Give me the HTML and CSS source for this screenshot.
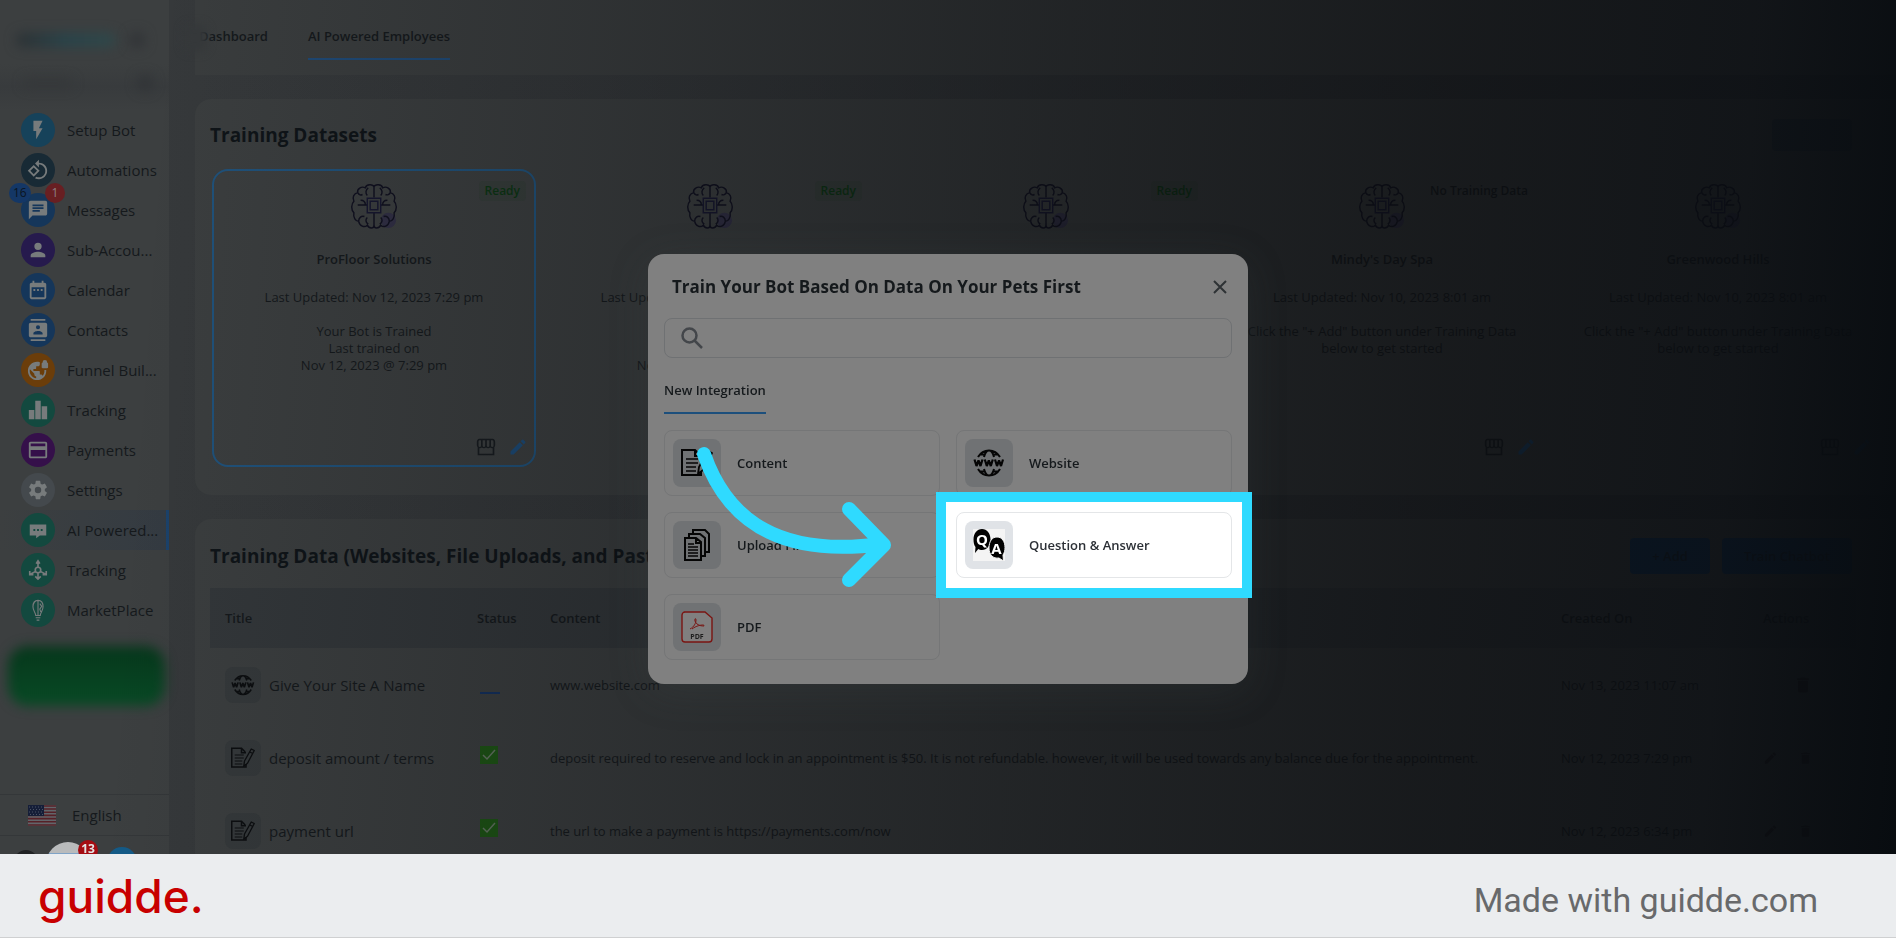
FILE: index.html
```html
<!DOCTYPE html>
<html lang="en">
<head>
<meta charset="utf-8">
<title>AI Powered Employees</title>
<link rel="stylesheet" href="styles.css">
</head>
<body>
<svg class="defs" aria-hidden="true">
  <symbol id="brain" viewBox="0 0 48 48">
    <circle class="brain-tint" cx="39" cy="39" r="8"/>
    <path d="M24 2v13M24 31v15M24 4c-1-3-8-3-9 1-4-2-9 1-8 5-4 1-6 5-4 9-3 3-3 9 0 12-1 5 2 9 5 9 1 5 6 7 9 4 2 4 7 4 7 0M24 4c1-3 8-3 9 1 4-2 9 1 8 5 4 1 6 5 4 9 3 3 3 9 0 12 1 5-2 9-5 9-1 5-6 7-9 4-2 4-7 4-7 0M18 5c-3 2-3 6-1 8M7 10c1 2 3 3 5 2M7 23h10M10 18c3 0 5 2 5 5M8 40c0-4 3-6 6-5M18 43c-3-2-3-5-1-7M30 5c3 2 3 6 1 8M41 10c-1 2-3 3-5 2M41 23H31M38 18c-3 0-5 2-5 5M40 40c0-4-3-6-6-5M30 43c3-2 3-5 1-7"/>
    <path class="chip" d="M17 16h14v15H17zM20 19h8v9h-8z"/>
  </symbol>
  <symbol id="store" viewBox="0 0 24 24"><path fill="currentColor" d="M20 2H4C2.300 2 1 3.800 1 6v4c0 1 .4 1.800 1 2.400V22h20v-9.600c.6-.6 1-1.400 1-2.400V6c0-2.200-1.300-4-3-4zM4 4h2v6.500a1.500 1.500 0 0 1-3 0V6c0-1 .4-2 1-2zm4 0h3v6.500a1.500 1.500 0 0 1-3 0zm5 0h3v6.500a1.500 1.500 0 0 1-3 0zm5 0h2c.6 0 1 1 1 2v4.500a1.500 1.500 0 0 1-3 0zM4 20v-6.600c1 .2 2.200-.1 3-.9 1.400 1.300 3.600 1.300 5 0 1.400 1.300 3.600 1.300 5 0 .8.8 2 1.100 3 .9V20z"/></symbol>
  <symbol id="pencil" viewBox="0 0 24 24"><path fill="currentColor" d="M3 17.250V21h3.750L17.810 9.940l-3.750-3.750L3 17.250zM20.710 7.040a1 1 0 0 0 0-1.410l-2.340-2.340a1 1 0 0 0-1.410 0l-1.830 1.830 3.750 3.750 1.830-1.830z"/></symbol>
  <symbol id="trash" viewBox="0 0 24 24"><path fill="currentColor" d="M6 19c0 1.100.9 2 2 2h8c1.100 0 2-.9 2-2V7H6v12zM19 4h-3.500l-1-1h-5l-1 1H5v2h14V4z"/></symbol>
  <symbol id="www" viewBox="0 0 32 32">
    <g fill="none" stroke="currentColor" stroke-width="2"><path d="M5 10C8 5 12 3.500 16 3.500S24 5 27 10M5 22c3 5 7 6.500 11 6.500S24 27 27 22M11 10c1-4 3-6.500 5-6.500s4 2.500 5 6.500M11 22c1 4 3 6.500 5 6.500s4-2.500 5-6.500M7 7.500h4M21 7.500h4M7 24.500h4M21 24.500h4"/><path stroke-width="2.200" stroke-linejoin="bevel" d="M1.500 12.500l2 6.500 2-5.500 2 5.500 2-6.500M11.800 12.500l2 6.500 2-5.500 2 5.500 2-6.500M22 12.500l2 6.500 2-5.500 2 5.500 2-6.500"/></g>
  </symbol>
  <symbol id="note" viewBox="0 0 32 32">
    <g fill="none" stroke="currentColor" stroke-width="2"><path d="M20 24v4H1V3h13l5 5M14 3v6h6"/><path stroke-width="1.500" d="M5 12h12M5 16h12M5 20h10M5 24h10"/></g>
    <path fill="none" stroke="currentColor" stroke-width="1.800" stroke-linejoin="round" d="M27 4l4 2-9 17-5 4 1-7zM25 8l4 2"/>
  </symbol>
  <symbol id="files" viewBox="0 0 32 32"><g fill="none" stroke="currentColor" stroke-width="2"><path d="M4 9h11l5 4v18H4zM8 8V5h11l5 4v18h-3M12 4V1h12l4 4v18h-3M15 9v5h5"/><path stroke-width="1.500" d="M7 15h6M7 18h10M7 21h10M7 24h10M7 27h10"/></g></symbol>
</svg>

<div class="app">
  <aside class="sidebar">
    <div class="brand"><span class="smudge smudge-logo"></span><span class="smudge smudge-dot"></span></div>
    <div class="account"><span class="smudge smudge-line"></span><span class="smudge smudge-dot"></span></div>
    <nav class="menu" aria-label="Main">
      <a href="#"><span class="ic sky"><svg viewBox="0 0 24 24"><path d="M7 2v11h3v9l7-12h-4l4-8z"/></svg></span><span class="label">Setup Bot</span></a>
      <a href="#"><span class="ic slate"><svg viewBox="0 0 24 24"><path d="M7.340 6.410L.86 12.900l6.490 6.480 6.490-6.480-6.500-6.490zM3.690 12.900l3.660-3.660L11 12.900l-3.660 3.660-3.650-3.660zm15.670-6.260C17.610 4.880 15.300 4 13 4V.76L8.760 5 13 9.240V6c1.790 0 3.580.68 4.950 2.050 2.730 2.730 2.730 7.170 0 9.900C16.580 19.320 14.790 20 13 20c-.97 0-1.940-.21-2.840-.61l-1.490 1.490C10.020 21.620 11.510 22 13 22c2.300 0 4.610-.88 6.360-2.640 3.520-3.510 3.520-9.210 0-12.720z"/></svg></span><span class="label">Automations</span></a>
      <a href="#"><span class="ic blue"><svg viewBox="0 0 24 24"><path d="M20 2H4c-1.100 0-2 .9-2 2v18l4-4h14c1.100 0 2-.9 2-2V4c0-1.100-.9-2-2-2zM6 9h12v2H6V9zm8 5H6v-2h8v2zm4-6H6V6h12v2z"/></svg><b class="count count-left">16</b><b class="count count-right">1</b></span><span class="label">Messages</span></a>
      <a href="#"><span class="ic violet"><svg viewBox="0 0 24 24"><path d="M12 12a4 4 0 1 0 0-8 4 4 0 0 0 0 8zm0 2c-2.670 0-8 1.340-8 4v2h16v-2c0-2.660-5.330-4-8-4z"/></svg></span><span class="label">Sub-Accou...</span></a>
      <a href="#"><span class="ic blue"><svg viewBox="0 0 24 24"><path d="M9 11H7v2h2v-2zm4 0h-2v2h2v-2zm4 0h-2v2h2v-2zm2-7h-1V2h-2v2H8V2H6v2H5c-1.110 0-2 .9-2 2v14c0 1.100.89 2 2 2h14c1.100 0 2-.9 2-2V6c0-1.100-.9-2-2-2zm0 16H5V9h14v11z"/></svg></span><span class="label">Calendar</span></a>
      <a href="#"><span class="ic blue"><svg viewBox="0 0 24 24"><path d="M20 0H4v2h16V0zM4 24h16v-2H4v2zM20 4H4c-1.100 0-2 .9-2 2v12c0 1.100.9 2 2 2h16c1.100 0 2-.9 2-2V6c0-1.100-.9-2-2-2zm-8 2.750a2.250 2.250 0 1 1 0 4.500 2.250 2.250 0 0 1 0-4.500zM17 17H7v-1.500c0-1.670 3.330-2.500 5-2.500s5 .83 5 2.500V17z"/></svg></span><span class="label">Contacts</span></a>
      <a href="#"><span class="ic orange"><svg viewBox="0 0 24 24"><path d="M22 4v-.5a2.500 2.500 0 0 0-5 0V4c-.55 0-1 .45-1 1v4c0 .55.45 1 1 1h5c.55 0 1-.45 1-1V5c0-.55-.45-1-1-1zm-3.080 8c.04.33.08.66.08 1 0 2.080-.8 3.970-2.100 5.390-.26-.81-1-1.390-1.900-1.390h-1v-3c0-.55-.45-1-1-1H7v-2h2c.55 0 1-.45 1-1V8h2c1.100 0 2-.9 2-2V3.460C13.050 3.160 12.050 3 11 3 5.480 3 1 7.480 1 13s4.480 10 10 10 10-4.480 10-10c0-.34-.02-.67-.05-1h-2.030zM10 20.930c-3.950-.49-7-3.850-7-7.930 0-.62.08-1.210.21-1.790L8 16v1c0 1.100.9 2 2 2v1.930z"/></svg></span><span class="label">Funnel Buil...</span></a>
      <a href="#"><span class="ic green"><svg viewBox="0 0 24 24"><path d="M2 12h6v10H2zM9 2h6v20H9zM16 8h6v14h-6z"/></svg></span><span class="label">Tracking</span></a>
      <a href="#"><span class="ic purple"><svg viewBox="0 0 24 24"><path d="M20 3H4C2.890 3 2 3.890 2 5v14c0 1.110.89 2 2 2h16c1.110 0 2-.89 2-2V5c0-1.110-.89-2-2-2zm0 16H4v-7h16v7zm0-11H4V5h16v3z"/></svg></span><span class="label">Payments</span></a>
      <a href="#"><span class="ic grey"><svg viewBox="0 0 24 24"><path d="M19.430 12.980c.04-.32.07-.64.07-.98s-.03-.66-.07-.98l2.110-1.650c.19-.15.24-.42.12-.64l-2-3.460c-.12-.22-.39-.3-.61-.22l-2.490 1c-.52-.4-1.080-.73-1.690-.98l-.38-2.650A.49.49 0 0 0 14 2h-4c-.25 0-.46.18-.49.42l-.38 2.650c-.61.25-1.170.59-1.690.98l-2.490-1c-.23-.09-.49 0-.61.22l-2 3.460c-.13.22-.07.49.12.64l2.110 1.650c-.04.32-.07.65-.07.98s.03.66.07.98l-2.110 1.650c-.19.15-.24.42-.12.64l2 3.460c.12.22.39.3.61.22l2.490-1c.52.4 1.080.73 1.690.98l.38 2.650c.03.24.24.42.49.42h4c.25 0 .46-.18.49-.42l.38-2.650c.61-.25 1.170-.59 1.690-.98l2.490 1c.23.09.49 0 .61-.22l2-3.460c.12-.22.07-.49-.12-.64l-2.110-1.650zM12 15.500a3.500 3.500 0 1 1 0-7 3.500 3.500 0 0 1 0 7z"/></svg></span><span class="label">Settings</span></a>
      <a href="#" class="active"><span class="ic green"><svg viewBox="0 0 24 24"><path d="M3 6h18v12h-7l-4 3v-3H3zM7 11v2h2v-2zm4 0v2h2v-2zm4 0v2h2v-2z" fill-rule="evenodd"/></svg></span><span class="label">AI Powered...</span></a>
      <a href="#"><span class="ic green"><svg viewBox="0 0 24 24"><g fill="none" stroke="#777b7c" stroke-width="1.800"><circle cx="12" cy="12" r="3"/><path d="M12 9V3M12 15v7M9.500 13.500L3 17M14.500 13.500L21 17M10 5l2-3 2 3M3 13v4h4M21 13v4h-4M9 19l3 3 3-3"/></g></svg></span><span class="label">Tracking</span></a>
      <a href="#"><span class="ic green"><svg viewBox="0 0 24 24"><g fill="none" stroke="#777b7c" stroke-width="1.200"><path d="M9.500 18c0-3-3-5-3-9.500C6.500 4 9 1.500 12 1.500s5.500 2.500 5.500 7c0 4.500-3 6.500-3 9.500zM9.500 20.500h5M10.500 23h3M12 2v16M14 5l2 3-2 3 1 3"/></g></svg></span><span class="label">MarketPlace</span></a>
    </nav>
    <div class="promo"></div>
    <div class="language"><svg class="flag" viewBox="0 0 28 21"><path fill="#62656b" d="M0 0h28v21H0z"/><path stroke="#562027" stroke-width="1.600" d="M0 1h28M0 4h28M0 7.200h28M0 10.400h28M0 13.600h28M0 16.800h28M0 20h28"/><path fill="#151e38" d="M0 0h16v11H0z"/><path stroke="#4a5265" stroke-dasharray="1 2" d="M1 2h14M2 4.500h14M1 7h14M2 9.500h14"/></svg><span>English</span></div>
    <div class="people"><span class="av av-dark"></span><span class="av av-white"><b>13</b></span><span class="av av-blue"></span></div>
  </aside>

  <main class="main">
    <nav class="tabs" aria-label="Sections"><a href="#">Dashboard</a><a href="#" class="current">AI Powered Employees</a></nav>

    <section class="panel datasets">
      <div class="panel-head"><h2>Training Datasets</h2><button class="ghost" type="button" aria-label="Add dataset"></button></div>
      <div class="cards">
        <article class="card selected"><span class="tag">Ready</span><svg class="brain"><use href="#brain"/></svg><h3>ProFloor Solutions</h3><p>Last Updated: Nov 12, 2023 7:29 pm</p><p class="state">Your Bot is Trained<br>Last trained on<br>Nov 12, 2023 @ 7:29 pm</p><div class="tools"><svg><use href="#store"/></svg><svg class="edit"><use href="#pencil"/></svg></div></article>
        <article class="card"><span class="tag">Ready</span><svg class="brain"><use href="#brain"/></svg><h3></h3><p>Last Updated: Nov 12, 2023 7:29 pm</p><p class="state"><br><br>Nov 12, 2023 @ 7:29 pm</p></article>
        <article class="card"><span class="tag">Ready</span><svg class="brain"><use href="#brain"/></svg></article>
        <article class="card"><span class="tag none">No Training Data</span><svg class="brain"><use href="#brain"/></svg><h3>Mindy's Day Spa</h3><p>Last Updated: Nov 10, 2023 8:01 am</p><p class="state">Click the "+ Add" button under Training Data below to get started</p><div class="tools"><svg><use href="#store"/></svg><svg class="edit"><use href="#pencil"/></svg></div></article>
        <article class="card"><svg class="brain"><use href="#brain"/></svg><h3>Greenwood Hills</h3><p>Last Updated: Nov 10, 2023 8:01 am</p><p class="state">Click the "+ Add" button under Training Data below to get started</p><div class="tools"><svg><use href="#store"/></svg><svg class="edit"><use href="#pencil"/></svg></div></article>
      </div>
    </section>

    <section class="panel data">
      <div class="panel-head"><h2>Training Data (Websites, File Uploads, and Pasted Content)</h2><div class="actions"><button type="button">+ Add</button><button type="button">Train Chatbot</button></div></div>
      <table>
        <thead><tr><th class="c-title">Title</th><th class="c-status">Status</th><th>Content</th><th class="c-date">Created On</th><th class="c-act">Actions</th></tr></thead>
        <tbody>
          <tr><td><div class="name"><span class="thumb"><svg><use href="#www"/></svg></span>Give Your Site A Name</div></td><td><span class="dash"></span></td><td>www.website.com</td><td>Nov 13, 2023 11:07 am</td><td><div class="row-tools"><svg><use href="#trash"/></svg></div></td></tr>
          <tr><td><div class="name"><span class="thumb"><svg><use href="#note"/></svg></span>deposit amount / terms</div></td><td><svg class="check" viewBox="0 0 18 18"><path d="M3 9l4 4 8-9"/></svg></td><td>deposit required to reserve and lock in an appointment is $50. It is not refundable. however, it will be used towards any balance due for the appointment.</td><td>Nov 12, 2023 7:29 pm</td><td><div class="row-tools"><svg><use href="#pencil"/></svg><svg><use href="#trash"/></svg></div></td></tr>
          <tr><td><div class="name"><span class="thumb"><svg><use href="#note"/></svg></span>payment url</div></td><td><svg class="check" viewBox="0 0 18 18"><path d="M3 9l4 4 8-9"/></svg></td><td>the url to make a payment is https://payments.com/now</td><td>Nov 12, 2023 6:34 pm</td><td><div class="row-tools"><svg><use href="#pencil"/></svg><svg><use href="#trash"/></svg></div></td></tr>
        </tbody>
      </table>
    </section>
  </main>
  <div class="shade"></div>
</div>

<footer class="footer"><span class="logo">guidde.</span><a href="#">Made with guidde.com</a></footer>

<div class="overlay">
  <div class="modal" role="dialog" aria-labelledby="modal-title">
    <header><h1 id="modal-title">Train Your Bot Based On Data On Your Pets First</h1><button class="close" type="button" aria-label="Close"><svg viewBox="0 0 14 14"><path d="M1 1l12 12M13 1L1 13"/></svg></button></header>
    <label class="search"><svg viewBox="0 0 22 22"><circle cx="8.500" cy="8.500" r="7"/><path d="M13.500 13.500l7.500 7.500"/></svg><input type="text" aria-label="Search"></label>
    <div class="modal-tabs"><button type="button">New Integration</button></div>
    <div class="options">
      <button type="button"><span class="tile"><svg><use href="#note"/></svg></span>Content</button>
      <button type="button"><span class="tile"><svg><use href="#www"/></svg></span>Website</button>
      <button type="button"><span class="tile"><svg><use href="#files"/></svg></span>Upload Files</button>
      <button type="button" class="spot"><span class="tile"><svg viewBox="0 0 32 32"><path fill="#f4f4f4" d="M0 0h32v32H0z"/><path d="M9 0c5 0 8.500 4.500 8.500 10.500S14 21 9 21c-1.500 0-2.600-.3-3.700-1L2 24l.5-6C1 16 .5 13.500.5 10.500.500 4.500 4 0 9 0z"/><path stroke="#f4f4f4" d="M24 8c5 0 8 4.500 8 10.500 0 3-.5 5-2 7.500l.5 6-4.500-3c-6 1-10-3.500-10-10S19 8 24 8z"/><text x="9" y="16" text-anchor="middle">Q</text><text x="23.500" y="25" text-anchor="middle">A</text></svg></span>Question &amp; Answer</button>
      <button type="button"><span class="tile"><svg viewBox="0 0 32 32"><path d="M3 1h21l7 6v21a3 3 0 0 1-3 3H4a3 3 0 0 1-3-3V4a3 3 0 0 1 3-3z" fill="#807f7f" stroke="#7a1512" stroke-width="1.400"/><path d="M9 18c4-2 6-6 6-9 0-2-1.500-2-1 1 1 3 4 5 9 5 1-2-7-1-12 3" fill="none" stroke="#7a1512"/><text class="pdf" x="16" y="28" text-anchor="middle">PDF</text></svg></span>PDF</button>
    </div>
    <svg class="arrow" viewBox="0 0 200 150"><path d="M12 14C30 66 72 120 190 104M157 69l35 36-35 35"/></svg>
  </div>
</div>
</body>
</html>
```
FILE: styles.css
```css
* { box-sizing: border-box; }
body {
  margin: 0;
  height: 100vh;
  display: flex;
  flex-direction: column;
  overflow: hidden;
  background: #0b0e11;
  font-family: "Open Sans", "Noto Sans", sans-serif;
  font-size: 13px;
  color: #15191c;
}
h1, h2, h3, p { margin: 0; }
a { color: inherit; text-decoration: none; }
button { font: inherit; color: inherit; border: 0; background: none; padding: 0; }
.defs { position: absolute; width: 0; height: 0; }

.app { position: relative; flex: 1; min-height: 0; display: flex; overflow: hidden; background: #383b3d; }
.shade {
  position: absolute;
  inset: 0;
  pointer-events: none;
  background: linear-gradient(94deg, rgba(9,11,14,0) 8%, rgba(9,11,14,.22) 30%, rgba(9,11,14,.5) 55%, rgba(9,11,14,.7) 75%, rgba(9,12,16,.82) 90%, #080c10 100%);
}

/* sidebar */
.sidebar { flex: none; width: 169px; display: flex; flex-direction: column; background: #3c3f40; }
.brand { display: flex; align-items: center; justify-content: space-between; height: 64px; padding: 16px 24px 0 16px; }
.account { display: flex; align-items: center; justify-content: space-between; height: 46px; padding: 0 16px 8px 24px; background: linear-gradient(#3c3f40, #383b3d 50%, #3c3f40); }
.smudge { display: block; border-radius: 8px; filter: blur(6px); }
.smudge-logo { width: 100px; height: 14px; background: linear-gradient(90deg, #2b3033, #28444a 50%, #2f484a); }
.smudge-dot { width: 16px; height: 16px; background: #313437; }
.smudge-line { width: 48px; height: 8px; background: #343739; }
.menu { display: flex; flex-direction: column; }
.menu a { display: flex; align-items: center; gap: 12px; height: 40px; padding: 0 4px 0 21px; border-right: 3px solid transparent; font-size: 15px; }
.menu .label { white-space: nowrap; }
.menu .active { background: linear-gradient(90deg, #3c3f40, #343b42); border-right-color: #1b426b; }
.ic { position: relative; flex: none; display: grid; place-items: center; width: 34px; height: 34px; border-radius: 50%; }
.ic svg { width: 22px; height: 22px; fill: #777b7c; }
.sky { background: #16425a; }
.slate { background: #182a35; }
.blue { background: #15365a; }
.violet { background: #261a4d; }
.orange { background: #6b3d0a; }
.green { background: #13493f; }
.purple { background: #35104a; }
.grey { background: #44494d; }
.count { position: absolute; top: -10px; height: 20px; min-width: 20px; padding: 0 4px; border-radius: 10px; font-size: 12px; line-height: 20px; font-weight: 400; text-align: center; }
.count-left { left: -12px; background: #143766; color: #0b1420; }
.count-right { right: -10px; background: #681f22; color: #8d8183; }
.promo { margin: 16px 4px 0 8px; height: 60px; border-radius: 20px; background: linear-gradient(#06371b, #084a25); filter: blur(6px); }
.language { display: flex; align-items: center; gap: 16px; height: 42px; margin-top: auto; padding: 0 28px; border: 1px solid #343739; border-width: 1px 0; font-size: 15px; }
.flag { width: 28px; height: 21px; }
.people { position: relative; z-index: 2; display: flex; align-items: flex-start; height: 18px; padding-left: 14px; }
.av { position: relative; flex: none; width: 24px; height: 24px; margin-top: 14px; border-radius: 50%; background: #202224; }
.av-white { width: 44px; height: 44px; margin: 6px 0 0 8px; background: linear-gradient(#b9bbbc 24%, #7fa3c6 24%); }
.av-white b { position: absolute; left: 32px; top: -2px; width: 20px; height: 20px; border-radius: 50%; background: #a50c12; color: #e4e4e4; font-size: 12px; line-height: 18px; text-align: center; }
.av-blue { width: 30px; height: 30px; margin: 11px 0 0 17px; background: #145a86; }

/* main column */
.main { flex: 1; min-width: 0; padding-left: 26px; display: flex; flex-direction: column; gap: 24px; background: linear-gradient(90deg, #36393b, #303336); }
.tabs { position: relative; flex: none; display: flex; gap: 40px; height: 75px; padding: 24px 0 15px 4px; background: #3a3d3e; font-weight: 600; }
.tabs::before { content: ""; position: absolute; left: -12px; top: 24px; width: 24px; height: 28px; border-radius: 8px; background: #36393b; filter: blur(4px); }
.tabs a { line-height: 24px; white-space: nowrap; }
.tabs .current { border-bottom: 2px solid #1f4a77; }
.panel { flex: none; padding: 16px 0 28px 15px; background: #3b3e3f; border-radius: 16px 0 0 16px; }
.panel-head { display: flex; align-items: center; justify-content: space-between; height: 40px; padding-right: 44px; }
.panel-head h2 { font-size: 19px; line-height: 24px; font-weight: 700; white-space: nowrap; color: #0f1418; }
.ghost { width: 80px; height: 32px; border-radius: 4px; background: #283139; }
.cards { display: grid; grid-template-columns: repeat(5, 324px); gap: 12px; padding: 14px 0 0 2px; overflow: hidden; }
.card { position: relative; display: flex; flex-direction: column; align-items: center; height: 298px; padding: 12px 16px; border: 2px solid transparent; border-radius: 16px; text-align: center; }
.selected { border-color: #20527b; }
.brain { width: 48px; height: 46px; fill: none; stroke: #10101f; stroke-width: 1.5px; }
.chip { stroke: #16162f; }
.brain-tint { fill: #312f45; stroke: none; }
.card h3 { height: 20px; margin-top: 20px; font-size: 13px; line-height: 20px; font-weight: 600; }
.card p { margin-top: 18px; line-height: 20px; }
.card .state { margin-top: 16px; line-height: 17px; }
.tag { position: absolute; top: 10px; right: 8px; padding: 0 6px; border-radius: 4px; background: #363d3a; color: #0b3512; font-size: 12px; line-height: 20px; font-weight: 600; }
.tag.none { background: none; color: #14181b; }
.tools { position: absolute; right: 6px; bottom: 8px; display: flex; gap: 12px; color: #171b1f; }
.tools svg { width: 20px; height: 20px; }
.tools .edit { color: #1c4b78; }
.data { padding-top: 17px; }
.actions { display: flex; gap: 12px; }
.actions button { height: 36px; padding: 0 22px; border-radius: 4px; background: #0d2f54; color: #0f1c2a; font-weight: 600; }
table { width: calc(100% - 40px); margin-top: 12px; border-collapse: collapse; table-layout: fixed; }
th, td { padding: 0 15px; text-align: left; }
th { height: 60px; background: #33373a; font-weight: 600; }
td { height: 73px; white-space: nowrap; }
.c-title { width: 252px; }
.c-status { width: 73px; }
.c-date { width: 202px; }
.c-act { width: 108px; }
.name { display: flex; align-items: center; gap: 8px; font-size: 15px; }
.thumb { flex: none; display: grid; place-items: center; width: 36px; height: 36px; border-radius: 8px; background: #35393b; color: #0c0e10; }
.thumb svg { width: 24px; height: 24px; }
.dash { display: block; width: 20px; height: 2px; margin: 16px 0 0 3px; background: #13305e; }
.check { display: block; width: 18px; height: 18px; margin: 0 0 6px 3px; background: #1d5514; fill: none; stroke: #657563; stroke-width: 1.5px; }
.row-tools { display: flex; justify-content: flex-end; gap: 20px; padding-right: 28px; }
.row-tools svg { width: 20px; height: 20px; color: #22191b; }

/* footer */
.footer { flex: none; display: flex; align-items: center; justify-content: space-between; height: 84px; padding: 0 78px 0 38px; border-bottom: 1px solid #cfd0d1; background: #ebedef; }
.logo { font-family: Inter, sans-serif; font-size: 46px; line-height: 60px; font-weight: 500; color: #c80000; }
.footer a { padding-top: 8px; font-family: Roboto, sans-serif; font-size: 34px; color: #68696b; }

/* dialog */
.overlay { position: fixed; inset: 0; display: grid; place-items: center; }
.modal { position: relative; width: 600px; padding: 16px 16px 24px; border-radius: 16px; background: #808080; box-shadow: 0 8px 40px rgba(70,78,82,.2); }
.modal header { display: flex; align-items: center; justify-content: space-between; height: 34px; padding: 0 4px 0 8px; }
.modal h1 { font-size: 17px; line-height: 24px; font-weight: 700; color: #15191c; }
.close { display: grid; place-items: center; width: 16px; height: 16px; }
.close svg { width: 14px; height: 14px; fill: none; stroke: #2e3235; stroke-width: 2px; }
.search { display: flex; align-items: center; gap: 8px; height: 40px; margin-top: 14px; padding: 0 16px; border: 1px solid #6f7173; border-radius: 8px; }
.search svg { flex: none; width: 22px; height: 22px; fill: none; stroke: #43464a; stroke-width: 2.5px; }
.search input { flex: 1; min-width: 0; border: 0; outline: 0; background: none; font: inherit; }
.modal-tabs { margin-top: 20px; }
.modal-tabs button { display: block; height: 36px; padding-bottom: 10px; border-bottom: 2px solid #1c4f7c; font-weight: 600; }
.options { display: grid; grid-template-columns: 1fr 1fr; gap: 16px; margin-top: 16px; }
.options button { position: relative; display: flex; align-items: center; gap: 16px; height: 66px; padding: 0 8px; border: 1px solid #757677; border-radius: 8px; font-weight: 600; text-align: left; }
.tile { display: grid; place-items: center; width: 48px; height: 48px; border-radius: 8px; background: #707274; color: #050505; }
.tile svg { width: 32px; height: 32px; }
.tile text { font-family: "Open Sans", sans-serif; font-size: 15px; font-weight: 700; fill: #fff; }
.tile .pdf { font-size: 7px; fill: #1d1d1d; }
.options .spot { z-index: 1; border-color: #e4e6e8; background: #fff; color: #2c3036; }
.spot::before { content: ""; position: absolute; z-index: -1; inset: -21px; border: 10px solid #2fdaff; background: #fff; }
.spot::after { content: ""; position: absolute; z-index: -1; inset: -1px; border: 1px solid #e4e6e8; border-radius: 8px; }
.spot .tile { background: #e0e3e7; }
.arrow { position: absolute; z-index: 2; left: 44px; top: 186px; width: 200px; height: 150px; fill: none; stroke: #2fdaff; stroke-width: 14px; stroke-linecap: round; stroke-linejoin: round; }
```
